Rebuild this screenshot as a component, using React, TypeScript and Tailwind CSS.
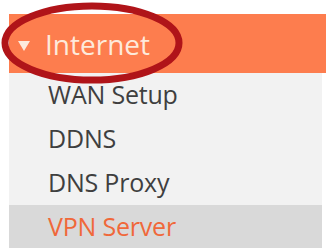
import React from "react";

const items = ["WAN Setup", "DDNS", "DNS Proxy"];

export default function App() {
  return (
    <div className="relative w-[326px] h-[251px] bg-white overflow-hidden pt-[14px] pl-[9px] font-['Open_Sans',sans-serif]">
      <div className="h-[59px] bg-[#fd7d4e] flex items-center pl-[9px]">
        <svg width="12" height="11" viewBox="0 0 12 11" className="mt-[3px]">
          <polygon points="0,1 12,1 6,11" fill="#fdeadb" />
        </svg>
        <span className="ml-[15px] text-[28px] leading-none text-[#fdeadb]">Internet</span>
      </div>
      <div className="bg-[#f2f2f2] w-[313px]">
        {items.map((t) => (
          <div key={t} className="h-[44px] flex items-center pl-[39px] text-[25px] font-medium tracking-[-0.2px] text-[#3f3f3f]">
            {t}
          </div>
        ))}
        <div className="h-[43px] flex items-center pl-[39px] text-[25px] font-medium tracking-[-0.2px] text-[#f0683a] bg-[#d9d9d9]">
          VPN Server
        </div>
      </div>
      <svg className="absolute left-0 top-0" width="200" height="100" viewBox="0 0 200 100">
        <ellipse cx="92" cy="43" rx="87" ry="37" fill="none" stroke="#b01419" strokeWidth="7" />
      </svg>
    </div>
  );
}
